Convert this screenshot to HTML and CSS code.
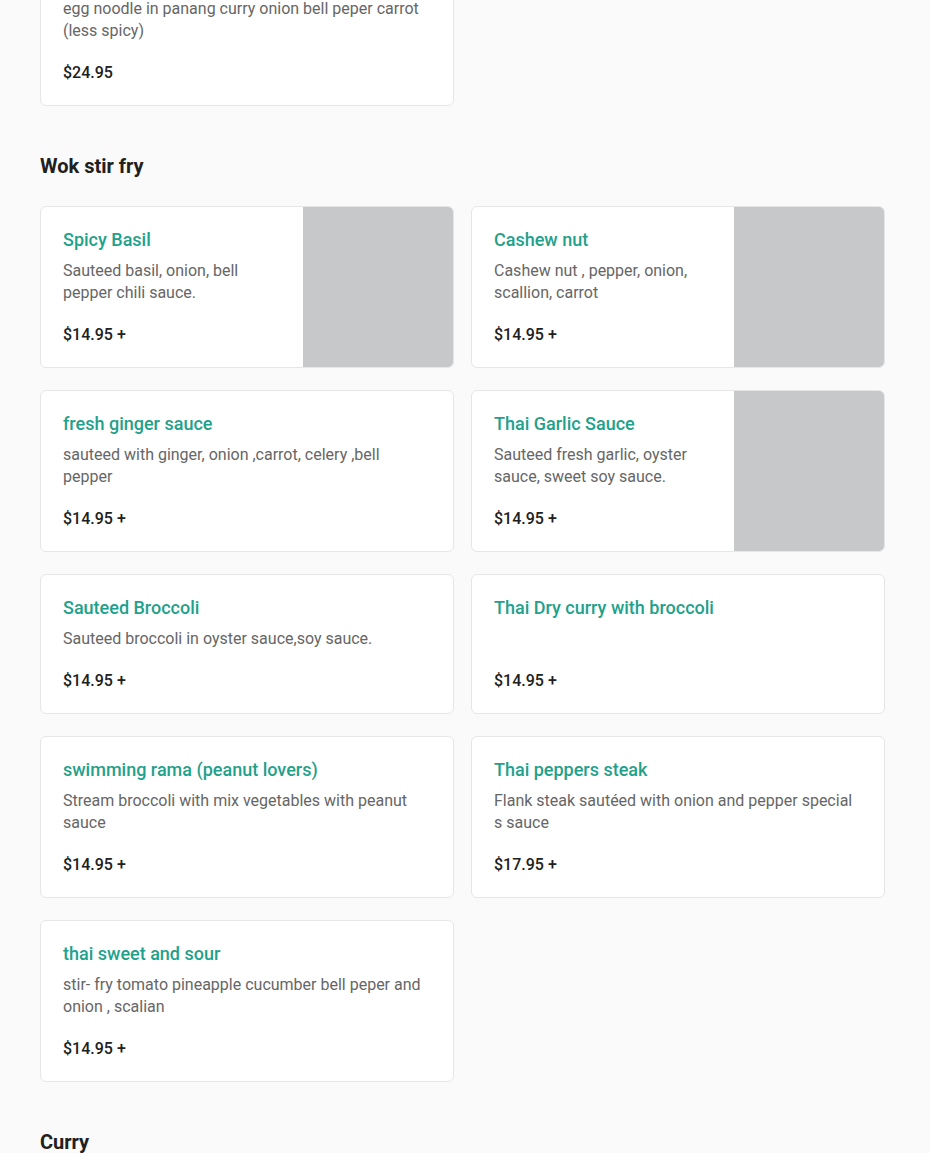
FILE: index.html
```html
<!DOCTYPE html>
<html lang="en">
<head>
<meta charset="utf-8">
<title>Menu</title>
<link rel="stylesheet" href="styles.css">
</head>
<body>
<main class="menu">
  <section class="section section-first">
    <div class="grid">
      <article class="card">
        <div class="card-body">
          <h3 class="item-name">Panang noodle</h3>
          <p class="item-desc">egg noodle in panang curry onion bell peper carrot (less spicy)</p>
          <p class="item-price">$24.95</p>
        </div>
      </article>
    </div>
  </section>

  <section class="section">
    <h2 class="section-title">Wok stir fry</h2>
    <div class="grid">
      <article class="card">
        <div class="card-body">
          <h3 class="item-name">Spicy Basil</h3>
          <p class="item-desc">Sauteed basil, onion, bell pepper chili sauce.</p>
          <p class="item-price">$14.95 +</p>
        </div>
        <div class="card-img"></div>
      </article>
      <article class="card">
        <div class="card-body">
          <h3 class="item-name">Cashew nut</h3>
          <p class="item-desc">Cashew nut , pepper, onion, scallion, carrot</p>
          <p class="item-price">$14.95 +</p>
        </div>
        <div class="card-img"></div>
      </article>
      <article class="card">
        <div class="card-body">
          <h3 class="item-name">fresh ginger sauce</h3>
          <p class="item-desc">sauteed with ginger, onion ,carrot, celery ,bell pepper</p>
          <p class="item-price">$14.95 +</p>
        </div>
      </article>
      <article class="card">
        <div class="card-body">
          <h3 class="item-name">Thai Garlic Sauce</h3>
          <p class="item-desc">Sauteed fresh garlic, oyster sauce, sweet soy sauce.</p>
          <p class="item-price">$14.95 +</p>
        </div>
        <div class="card-img"></div>
      </article>
      <article class="card">
        <div class="card-body">
          <h3 class="item-name">Sauteed Broccoli</h3>
          <p class="item-desc">Sauteed broccoli in oyster sauce,soy sauce.</p>
          <p class="item-price">$14.95 +</p>
        </div>
      </article>
      <article class="card">
        <div class="card-body">
          <h3 class="item-name">Thai Dry curry with broccoli</h3>
          <p class="item-desc"></p>
          <p class="item-price">$14.95 +</p>
        </div>
      </article>
      <article class="card">
        <div class="card-body">
          <h3 class="item-name">swimming rama (peanut lovers)</h3>
          <p class="item-desc">Stream broccoli with mix vegetables with peanut sauce</p>
          <p class="item-price">$14.95 +</p>
        </div>
      </article>
      <article class="card">
        <div class="card-body">
          <h3 class="item-name">Thai peppers steak</h3>
          <p class="item-desc">Flank steak sautéed with onion and pepper special s sauce</p>
          <p class="item-price">$17.95 +</p>
        </div>
      </article>
      <article class="card">
        <div class="card-body">
          <h3 class="item-name">thai sweet and sour</h3>
          <p class="item-desc">stir- fry tomato pineapple cucumber bell peper and onion , scalian</p>
          <p class="item-price">$14.95 +</p>
        </div>
      </article>
    </div>
  </section>

  <section class="section">
    <h2 class="section-title">Curry</h2>
  </section>
</main>
</body>
</html>
```

FILE: styles.css
```css
* {
  box-sizing: border-box;
}

html, body {
  margin: 0;
  padding: 0;
  background: #fafafa;
}

body {
  font-family: Roboto, "Liberation Sans", Arial, sans-serif;
  color: #202020;
}

.menu {
  width: 845px;
  margin-left: 40px;
  margin-top: -56px; /* page is scrolled: first card starts above the viewport */
}

.section {
  padding-top: 46px;
}

.section-first {
  padding-top: 0;
}

.section-title {
  margin: 0 0 26px;
  font-size: 20px;
  line-height: 28px;
  font-weight: 700;
  color: #202020;
}

.grid {
  display: grid;
  grid-template-columns: 1fr 1fr;
  gap: 22px 17px;
}

.card {
  display: flex;
  background: #ffffff;
  border: 1px solid #e6e6e6;
  border-radius: 6px;
  overflow: hidden;
}

.card-body {
  flex: 1;
  min-width: 0;
  display: flex;
  flex-direction: column;
  padding: 22px 22px 21px;
}

.card-img {
  flex: 0 0 150px;
  background: #c7c8ca;
}

.item-name {
  margin: 0;
  font-size: 18px;
  line-height: 22px;
  font-weight: 500;
  color: #1fa18b;
}

.item-desc {
  margin: 9px 0 0;
  min-height: 22px;
  font-size: 16px;
  line-height: 22px;
  font-weight: 400;
  color: #666666;
}

.item-price {
  margin: auto 0 0;
  padding-top: 20px;
  font-size: 16px;
  line-height: 22px;
  font-weight: 500;
  color: #202020;
}
```
